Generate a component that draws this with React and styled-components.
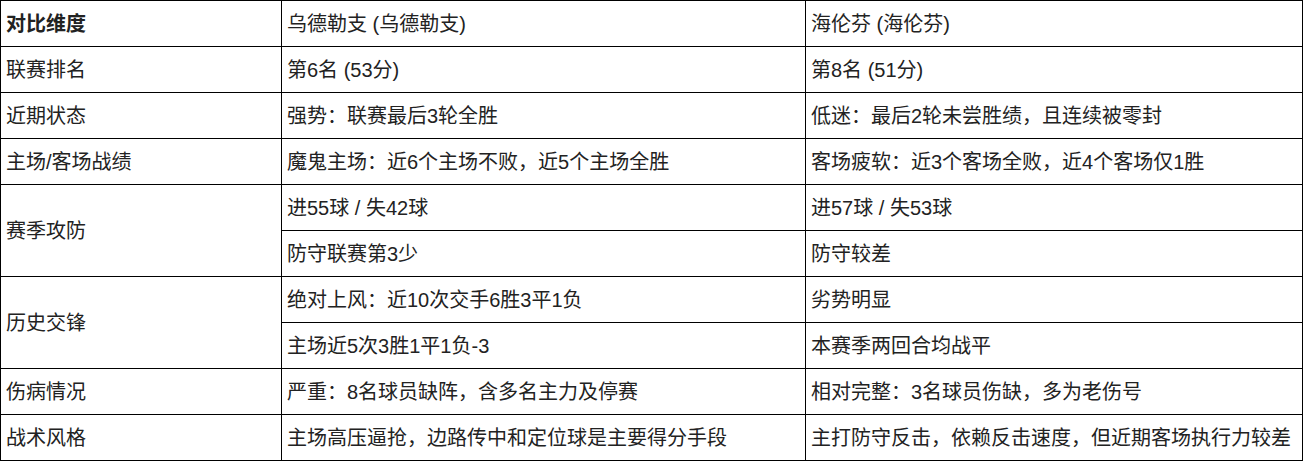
import { Fragment } from 'react';
import styled, { createGlobalStyle } from 'styled-components';

const GlobalStyle = createGlobalStyle`
  html, body {
    margin: 0;
    padding: 0;
    background: #ffffff;
  }
  body {
    font-family: "Liberation Sans", "Noto Sans CJK SC", sans-serif;
  }
`;

const Table = styled.table`
  width: 1303px;
  border-collapse: collapse;
  table-layout: fixed;
  font-size: 20px;
  color: #222222;

  col.dim {
    width: 281px;
  }
  col.home {
    width: 524px;
  }
`;

const Cell = styled.td`
  height: 45px;
  padding: 0 5px;
  border: 1px solid #000000;
  line-height: 24px;
  vertical-align: middle;
  text-align: left;
  white-space: nowrap;
  font-weight: ${(p) => (p.$bold ? 700 : 400)};
`;

const rows = [
  { dim: '联赛排名', home: ['第6名 (53分)'], away: ['第8名 (51分)'] },
  { dim: '近期状态', home: ['强势：联赛最后3轮全胜'], away: ['低迷：最后2轮未尝胜绩，且连续被零封'] },
  {
    dim: '主场/客场战绩',
    home: ['魔鬼主场：近6个主场不败，近5个主场全胜'],
    away: ['客场疲软：近3个客场全败，近4个客场仅1胜'],
  },
  {
    dim: '赛季攻防',
    home: ['进55球 / 失42球', '防守联赛第3少'],
    away: ['进57球 / 失53球', '防守较差'],
  },
  {
    dim: '历史交锋',
    home: ['绝对上风：近10次交手6胜3平1负', '主场近5次3胜1平1负-3'],
    away: ['劣势明显', '本赛季两回合均战平'],
  },
  {
    dim: '伤病情况',
    home: ['严重：8名球员缺阵，含多名主力及停赛'],
    away: ['相对完整：3名球员伤缺，多为老伤号'],
  },
  {
    dim: '战术风格',
    home: ['主场高压逼抢，边路传中和定位球是主要得分手段'],
    away: ['主打防守反击，依赖反击速度，但近期客场执行力较差'],
  },
];

const App = () => {
  return (
    <Fragment>
      <GlobalStyle />
      <Table>
        <colgroup>
          <col className="dim" />
          <col className="home" />
          <col className="away" />
        </colgroup>
        <thead>
          <tr>
            <Cell as="th" $bold>对比维度</Cell>
            <Cell as="th">乌德勒支 (乌德勒支)</Cell>
            <Cell as="th">海伦芬 (海伦芬)</Cell>
          </tr>
        </thead>
        <tbody>
          {rows.map((row) =>
            row.home.map((h, i) => (
              <tr key={row.dim + i}>
                {i === 0 && <Cell rowSpan={row.home.length}>{row.dim}</Cell>}
                <Cell>{h}</Cell>
                <Cell>{row.away[i]}</Cell>
              </tr>
            ))
          )}
        </tbody>
      </Table>
    </Fragment>
  );
};

export default App;
